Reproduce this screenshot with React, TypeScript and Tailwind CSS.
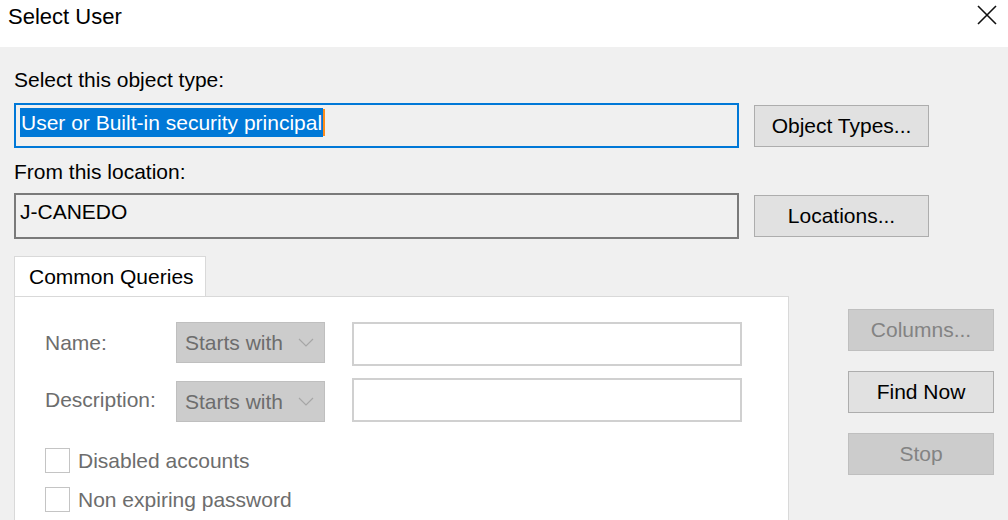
const font = { fontFamily: '"Liberation Sans", Arial, sans-serif' }

function Chevron() {
  return (
    <svg width="16" height="10" viewBox="0 0 16 10" className="shrink-0">
      <polyline points="1,1 8,8 15,1" fill="none" stroke="#a6a6a6" strokeWidth="1.2" />
    </svg>
  )
}

function Dropdown() {
  return (
    <div className="flex h-[41px] w-[149px] items-center justify-between border border-[#bfbfbf] bg-[#cccccc] pl-[8px] pr-[10px] text-[21px] text-[#6d6d6d]">
      <span>Starts with</span>
      <Chevron />
    </div>
  )
}

function Checkbox({ label }: { label: string }) {
  return (
    <div className="flex h-[25px] items-center gap-[8px]">
      <div className="h-[25px] w-[25px] border border-[#c4c4c4] bg-white" />
      <span className="text-[21px] text-[#6d6d6d]">{label}</span>
    </div>
  )
}

function Button({ label, disabled, className }: { label: string; disabled?: boolean; className?: string }) {
  return (
    <div
      className={
        "flex items-center justify-center border text-[21px] " +
        (disabled
          ? "border-[#bfbfbf] bg-[#cccccc] text-[#838383] "
          : "border-[#adadad] bg-[#e1e1e1] text-black ") +
        (className ?? "")
      }
    >
      {label}
    </div>
  )
}

export default function App() {
  return (
    <div className="h-[520px] w-[1008px] overflow-hidden bg-[#f0f0f0]" style={font}>
      <div className="flex h-[47px] items-start justify-between bg-white pl-[8px] pr-[11px]">
        <span className="pt-[3px] text-[22px] leading-[28px] text-black">Select User</span>
        <svg width="20" height="20" viewBox="0 0 20 20" className="mt-[5px]">
          <path d="M1 1L19 19M19 1L1 19" stroke="#111" strokeWidth="1.6" />
        </svg>
      </div>

      <div className="pl-[14px]">
        <div className="mt-[21px] text-[21px] leading-[24px] text-black">Select this object type:</div>
        <div className="mt-[11px] flex items-center">
          <div className="flex h-[45px] w-[725px] items-start border-2 border-[#0078d7] bg-[#f0f0f0] pl-[4px] pt-[3px]">
            <span className="bg-[#0078d7] px-[1px] text-[21px] leading-[29px] text-white">
              User or Built-in security principal
            </span>
            <span className="mt-[1px] h-[27px] w-[2px] bg-[#ff8c1a]" />
          </div>
          <Button label="Object Types..." className="ml-[15px] h-[42px] w-[175px]" />
        </div>

        <div className="mt-[12px] text-[21px] leading-[24px] text-black">From this location:</div>
        <div className="mt-[9px] flex items-center">
          <div className="flex h-[46px] w-[725px] items-start border-2 border-[#7a7a7a] bg-[#f0f0f0] pl-[4px] pt-[4px]">
            <span className="text-[21px] leading-[26px] text-black">J-CANEDO</span>
          </div>
          <Button label="Locations..." className="ml-[15px] h-[42px] w-[175px]" />
        </div>

        <div className="mt-[17px] flex items-start">
          <div className="flex w-[775px] flex-col">
            <div className="flex h-[41px] w-[192px] items-center border border-b-0 border-[#d9d9d9] bg-white pl-[14px] text-[21px] text-black">
              Common Queries
            </div>
            <div className="-mt-px h-[240px] border border-[#d9d9d9] bg-white pl-[30px] pt-[25px]">
              <div className="flex h-[44px] items-start">
                <span className="w-[131px] pt-[5px] text-[21px] text-[#6d6d6d]">Name:</span>
                <Dropdown />
                <div className="ml-[27px] h-[44px] w-[390px] border-2 border-[#d0d0d0] bg-white" />
              </div>
              <div className="mt-[12px] flex h-[44px] items-end">
                <span className="w-[131px] pb-[7px] text-[21px] text-[#6d6d6d]">Description:</span>
                <Dropdown />
                <div className="ml-[27px] h-[44px] w-[390px] border-2 border-[#d0d0d0] bg-white" />
              </div>
              <div className="mt-[26px] flex flex-col gap-[14px]">
                <Checkbox label="Disabled accounts" />
                <Checkbox label="Non expiring password" />
              </div>
            </div>
          </div>
          <div className="ml-[59px] flex w-[146px] flex-col gap-[20px] pt-[53px]">
            <Button label="Columns..." disabled className="h-[42px]" />
            <Button label="Find Now" className="h-[42px] border-[#7a7a7a]" />
            <Button label="Stop" disabled className="h-[42px]" />
          </div>
        </div>
      </div>
    </div>
  )
}
